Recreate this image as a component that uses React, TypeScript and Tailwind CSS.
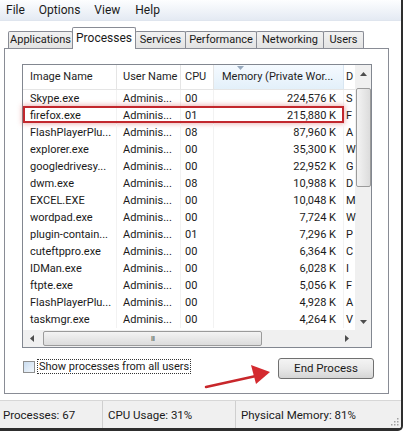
const rows = [
  { name: 'Skype.exe', cpu: '00', mem: '224,576 K', d: 'S' },
  { name: 'firefox.exe', cpu: '01', mem: '215,880 K', d: 'F', marked: true },
  { name: 'FlashPlayerPlu...', cpu: '08', mem: '87,960 K', d: 'A' },
  { name: 'explorer.exe', cpu: '00', mem: '35,300 K', d: 'W' },
  { name: 'googledrivesy...', cpu: '00', mem: '22,952 K', d: 'G' },
  { name: 'dwm.exe', cpu: '08', mem: '10,988 K', d: 'D' },
  { name: 'EXCEL.EXE', cpu: '00', mem: '10,048 K', d: 'M' },
  { name: 'wordpad.exe', cpu: '00', mem: '7,724 K', d: 'W' },
  { name: 'plugin-contain...', cpu: '01', mem: '7,296 K', d: 'P' },
  { name: 'cuteftppro.exe', cpu: '00', mem: '6,364 K', d: 'C' },
  { name: 'IDMan.exe', cpu: '00', mem: '6,028 K', d: 'I' },
  { name: 'ftpte.exe', cpu: '00', mem: '5,056 K', d: 'F' },
  { name: 'FlashPlayerPlu...', cpu: '00', mem: '4,928 K', d: 'A' },
  { name: 'taskmgr.exe', cpu: '00', mem: '4,264 K', d: 'V' },
]

// tab widths measured off the screenshot
const tabs = [
  { label: 'Applications', w: 'w-[65px]' },
  { label: 'Processes', w: 'w-[64px]' },
  { label: 'Services', w: 'w-[51px]' },
  { label: 'Performance', w: 'w-[72px]' },
  { label: 'Networking', w: 'w-[68px]' },
  { label: 'Users', w: 'w-[41px]' },
]

function Arrow({ dir }: { dir: 'up' | 'down' | 'left' | 'right' }) {
  const pts = {
    up: '0,4 3.5,0 7,4',
    down: '0,0 3.5,4 7,0',
    left: '4,0 0,3.5 4,7',
    right: '0,0 4,3.5 0,7',
  }[dir]
  const vertical = dir === 'up' || dir === 'down'
  return (
    <svg width={vertical ? 7 : 4} height={vertical ? 4 : 7} viewBox={vertical ? '0 0 7 4' : '0 0 4 7'}>
      <polygon points={pts} fill="#4d4d4d" />
    </svg>
  )
}

export default function App() {
  return (
    <div
      className="relative flex h-[431px] w-[403px] flex-col overflow-hidden rounded-br-[5px] border-r-2 border-b-[3px] border-[#2e2e2e] bg-white text-[11px] text-[#1a1a1a]"
      style={{ fontFamily: 'Roboto, "Liberation Sans", sans-serif' }}
    >
      {/* menu */}
      <div className="flex h-[21px] shrink-0 items-center border-b border-[#dfe5ee] bg-gradient-to-b from-[#fdfeff] to-[#e4eaf3] text-[12px]">
        <span className="ml-[6px]">File</span>
        <span className="ml-[14px]">Options</span>
        <span className="ml-[14px]">View</span>
        <span className="ml-[15px]">Help</span>
      </div>

      {/* tabs */}
      <div className="mt-[6px] flex h-[21px] shrink-0 items-end pl-[8px]">
        {tabs.map((t) =>
          t.label === 'Processes' ? (
            <div
              key={t.label}
              className={`relative z-10 -mb-px -ml-px flex h-[22px] items-center justify-center rounded-t-[2px] border border-b-0 border-[#898c95] bg-white pb-[2px] text-[12px] ${t.w}`}
            >
              {t.label}
            </div>
          ) : (
            <div
              key={t.label}
              className={`-ml-px flex h-[17px] items-center justify-center rounded-t-[2px] border border-b-0 border-[#898c95] bg-gradient-to-b from-[#f2f2f2] to-[#e3e3e3] text-[11px] first:ml-0 ${t.w}`}
            >
              {t.label}
            </div>
          ),
        )}
      </div>

      {/* panel */}
      <div className="ml-[4px] flex h-[346px] w-[385px] shrink-0 flex-col border border-[#898c95] bg-white pl-[17px] pt-[15px]">
        {/* list view */}
        <div className="flex h-[284px] w-[350px] flex-col border border-[#828790]">
          <div className="flex h-[265px]">
            <div className="flex w-[332px] flex-col">
              {/* header */}
              <div className="flex h-[25px] shrink-0 items-center border-b border-[#e5e5e5] text-[#1e1e1e]">
                <div className="w-[94px] border-r border-[#e5e5e5] pl-[7px] leading-[24px]">Image Name</div>
                <div className="w-[64px] border-r border-[#e5e5e5] pl-[6px] leading-[24px]">User Name</div>
                <div className="w-[33px] border-r border-[#e5e5e5] pl-[4px] leading-[24px]">CPU</div>
                <div className="relative w-[130px] border-r border-[#d8e6f2] bg-gradient-to-b from-[#f5faff] to-[#e3f0fa] pl-[8px] leading-[24px]">
                  Memory (Private Wor...
                  <svg className="absolute left-[23px] top-[1px]" width="7" height="4" viewBox="0 0 7 4">
                    <polygon points="0,0 3.5,4 7,0" fill="#97a9bd" />
                  </svg>
                </div>
                <div className="w-[11px] pl-[2px] leading-[24px]">D</div>
              </div>
              {/* rows */}
              {rows.map((r) => (
                <div key={r.name + r.mem} className="relative flex h-[17px] shrink-0 items-center">
                  <div className="w-[94px] truncate border-r border-[#f2f2f2] pl-[7px] leading-[17px]">{r.name}</div>
                  <div className="w-[64px] border-r border-[#f2f2f2] pl-[6px] leading-[17px]">Adminis...</div>
                  <div className="w-[33px] border-r border-[#f2f2f2] pl-[4px] leading-[17px]">{r.cpu}</div>
                  <div className="w-[130px] border-r border-[#f2f2f2] pr-[7px] text-right leading-[17px]">{r.mem}</div>
                  <div className="w-[11px] pl-[2px] leading-[17px]">{r.d}</div>
                  {r.marked && (
                    <div className="pointer-events-none absolute -top-px left-0 h-[17px] w-[321px] border-2 border-[#c2272d] shadow-[0_0_5px_1px_rgba(200,40,40,0.35)]" />
                  )}
                </div>
              ))}
            </div>
            {/* vertical scrollbar */}
            <div className="flex w-[16px] flex-col items-center bg-[#f0f0f0]">
              <div className="flex h-[17px] w-full items-center justify-center">
                <Arrow dir="up" />
              </div>
              <div className="mt-[6px] h-[99px] w-[15px] rounded-[2px] border border-[#9b9b9b] bg-gradient-to-r from-[#f4f4f4] to-[#dcdcdc]" />
              <div className="flex-1" />
              <div className="flex h-[17px] w-full items-center justify-center">
                <Arrow dir="down" />
              </div>
            </div>
          </div>
          {/* horizontal scrollbar */}
          <div className="flex h-[17px]">
            <div className="flex w-[332px] items-center bg-[#f0f0f0]">
              <div className="flex w-[17px] items-center justify-center">
                <Arrow dir="left" />
              </div>
              <div className="ml-[3px] flex h-[15px] w-[219px] items-center justify-center rounded-[2px] border border-[#9b9b9b] bg-gradient-to-b from-[#f4f4f4] to-[#dcdcdc] text-[8px] tracking-[-1px] text-[#6d6d6d]">
                III
              </div>
              <div className="flex-1" />
              <div className="flex w-[17px] items-center justify-center">
                <Arrow dir="right" />
              </div>
            </div>
            <div className="w-[16px] bg-[#f0f0f0]" />
          </div>
        </div>

        {/* bottom controls */}
        <div className="mt-[10px] flex w-[352px] items-start justify-between">
          <div className="mt-[1px] flex items-center">
            <div className="ml-[1px] h-[12px] w-[12px] border border-[#8e8f8f] bg-gradient-to-br from-[#c9dcef] to-[#f2f7fc]" />
            <span className="ml-[2px] border border-dotted border-[#333] px-px leading-[13px]">Show processes from all users</span>
          </div>
          <button className="h-[21px] w-[96px] rounded-[3px] border border-[#707070] bg-gradient-to-b from-[#f4f4f4] via-[#e9e9e9] to-[#d5d5d5] text-[11.5px] text-[#1a1a1a]">
            End Process
          </button>
        </div>
      </div>

      <div className="flex-1" />

      {/* status bar */}
      <div className="flex h-[28px] shrink-0 items-center border-t border-[#d7d7d7] bg-[#f0f0f0] text-[11.5px]">
        <div className="w-[103px] border-r border-[#cfcfcf] pl-[3px] leading-[28px]">Processes: 67</div>
        <div className="w-[133px] border-r border-[#cfcfcf] pl-[5px] leading-[28px]">CPU Usage: 31%</div>
        <div className="flex-1 pl-[5px] leading-[28px]">Physical Memory: 81%</div>
        <svg className="mr-[2px] mt-[12px]" width="10" height="10" viewBox="0 0 10 10">
          {[
            [8, 2],
            [8, 5],
            [5, 5],
            [8, 8],
            [5, 8],
            [2, 8],
          ].map(([x, y]) => (
            <rect key={`${x}-${y}`} x={x} y={y} width="1.5" height="1.5" fill="#a0a0a0" />
          ))}
        </svg>
      </div>

      {/* red annotation arrow */}
      <svg className="pointer-events-none absolute left-[204px] top-[360px]" width="72" height="32" viewBox="0 0 72 32">
        <line x1="2" y1="27" x2="52" y2="16" stroke="#c8272b" strokeWidth="2.5" strokeLinecap="round" />
        <polygon points="66,12 47,5 52,24" fill="#d42a2f" />
      </svg>
    </div>
  )
}
